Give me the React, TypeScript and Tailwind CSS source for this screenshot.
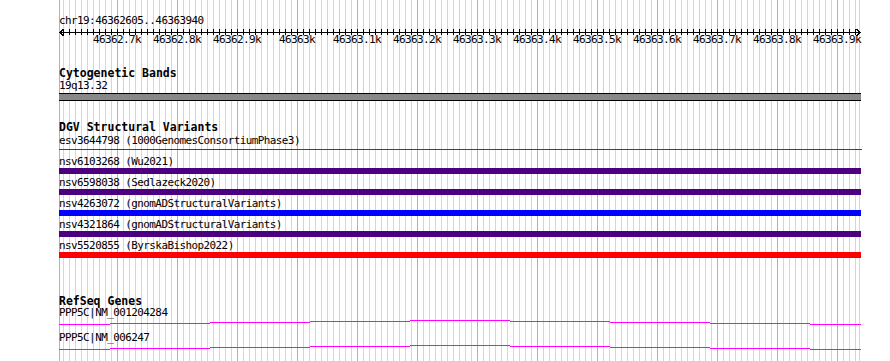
const LEFT = 59
const WIDTH = 802

// 10bp guide lines every 6px, 100bp guide lines every 60px
const minorX: number[] = []
for (let x = 63; x <= 855; x += 6) minorX.push(x)
minorX.push(859)
const majorX: number[] = [59]
for (let x = 117; x <= 837; x += 60) majorX.push(x)

const rulerLabels = [
  '46362.7k', '46362.8k', '46362.9k', '46363k', '46363.1k', '46363.2k', '46363.3k',
  '46363.4k', '46363.5k', '46363.6k', '46363.7k', '46363.8k', '46363.9k',
]

const variants = [
  { name: 'esv3644798 (1000GenomesConsortiumPhase3)', color: '', thin: true },
  { name: 'nsv6103268 (Wu2021)', color: 'bg-[#4b0082]' },
  { name: 'nsv6598038 (Sedlazeck2020)', color: 'bg-[#4b0082]' },
  { name: 'nsv4263072 (gnomADStructuralVariants)', color: 'bg-[#0000ff]' },
  { name: 'nsv4321864 (gnomADStructuralVariants)', color: 'bg-[#4b0082]' },
  { name: 'nsv5520855 (ByrskaBishop2022)', color: 'bg-[#ff0000]' },
]

// gene line drawn in 1px steps, x relative to track start
const geneSteps: [number, number, number][] = [
  [0, 51, 5], [51, 151, 4], [151, 251, 3], [251, 351, 2], [351, 451, 1],
  [451, 551, 2], [551, 651, 3], [651, 751, 4], [751, 802, 5],
]

const textCls = 'h-[12px] text-[11px] leading-[12px] tracking-[-0.6px] whitespace-nowrap text-black'
const headCls = 'text-[11.5px] font-bold leading-[12px] whitespace-nowrap text-black'

function GuideLines() {
  return (
    <svg className="absolute inset-0" width={890} height={361}>
      {minorX.map((x) => (
        <line key={'m' + x} x1={x + 0.5} y1={0} x2={x + 0.5} y2={361} stroke="#a0ecee" strokeWidth={1} />
      ))}
      {majorX.map((x) => (
        <line key={'M' + x} x1={x + 0.5} y1={0} x2={x + 0.5} y2={361} stroke="#7cc4ee" strokeWidth={1} />
      ))}
    </svg>
  )
}

function Ruler() {
  return (
    <svg width={803} height={8} className="overflow-visible" shapeRendering="crispEdges">
      <rect x={0} y={5} width={WIDTH} height={1} fill="#000" />
      {minorX.filter((x) => x < 859).map((x) => (
        <rect key={x} x={x - LEFT} y={2} width={1} height={6} fill="#000" />
      ))}
      <polyline points="4.5,2 1,5.5 4.5,9" fill="none" stroke="#000" strokeWidth={1} />
      <polyline points="797.5,2 801,5.5 797.5,9" fill="none" stroke="#000" strokeWidth={1} />
    </svg>
  )
}

function GeneLine() {
  return (
    <svg width={WIDTH} height={13} shapeRendering="crispEdges" className="block">
      {geneSteps.map(([a, b, y]) => (
        <rect key={a} x={a} y={y} width={b - a} height={1} fill="#ff00ff" />
      ))}
    </svg>
  )
}

export default function App() {
  return (
    <div className="relative w-[890px] h-[361px] overflow-hidden bg-white font-['DejaVu_Sans_Mono',monospace]">
      <GuideLines />
      <div className="relative flex flex-col pl-[59px] pt-[15px]">
        <div className={textCls}>chr19:46362605..46363940</div>
        <Ruler />
        <div className="flex -ml-[59px] pl-[87px] h-[10px]">
          {rulerLabels.map((l) => (
            <div key={l} className="w-[60px] shrink-0 text-center text-[11px] leading-[10px] tracking-[-0.6px] whitespace-nowrap">
              {l}
            </div>
          ))}
        </div>

        <div className={headCls + ' mt-[22px] h-[12px]'}>Cytogenetic Bands</div>
        <div className={textCls + ' mt-[1px]'}>19q13.32</div>
        <div className="mt-[1px] h-[8px] w-[802px] border-y border-black bg-[#888888]" />

        <div className={headCls + ' mt-[20px] h-[12px]'}>DGV Structural Variants</div>
        <div className="mt-[2px] flex flex-col">
          {variants.map((v) => (
            <div key={v.name} className="flex flex-col mb-[3px]">
              <div className={textCls}>{v.name}</div>
              {v.thin ? (
                <div className="h-[6px] w-[803px] pt-[2px]">
                  <div className="h-[1px] w-full bg-[#dd0000]" />
                </div>
              ) : (
                <div className={'h-[6px] w-[802px] ' + v.color} />
              )}
            </div>
          ))}
        </div>

        <div className="mt-[35px] h-[11px] text-[11.5px] font-bold leading-[11px] whitespace-nowrap">RefSeq Genes</div>
        <div className={textCls}>PPP5C|NM_001204284</div>
        <GeneLine />
        <div className={textCls}>PPP5C|NM_006247</div>
        <GeneLine />
      </div>
    </div>
  )
}
